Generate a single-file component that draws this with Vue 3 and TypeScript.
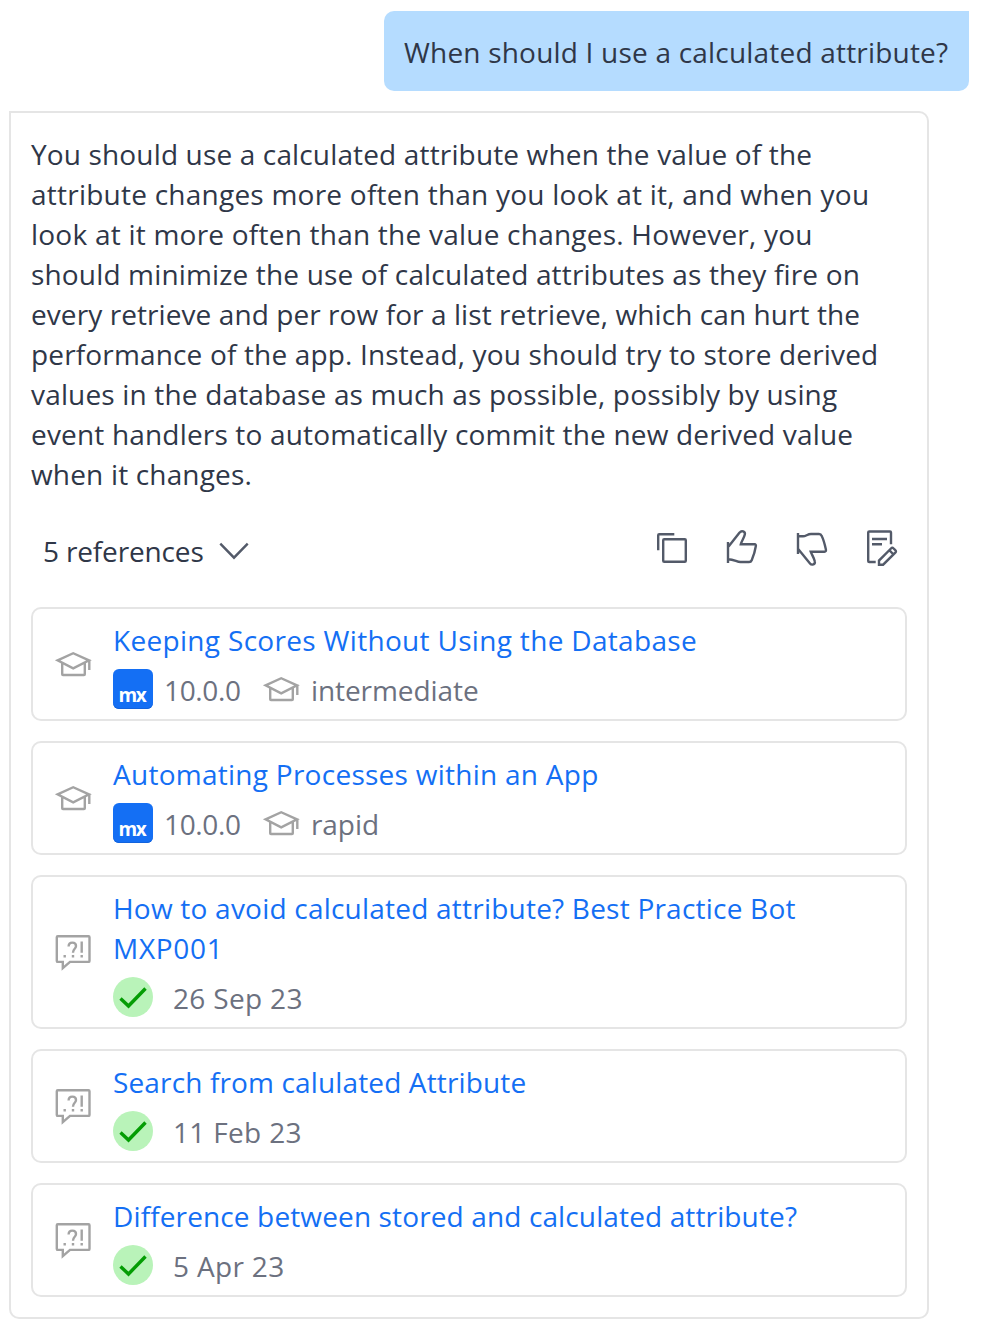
<script setup lang="ts">
interface Reference {
  kind: 'course' | 'forum'
  title: string[]
  detail: string
  level?: string
}

const question = 'When should I use a calculated attribute?'

const answer: string[] = [
  'You should use a calculated attribute when the value of the',
  'attribute changes more often than you look at it, and when you',
  'look at it more often than the value changes. However, you',
  'should minimize the use of calculated attributes as they fire on',
  'every retrieve and per row for a list retrieve, which can hurt the',
  'performance of the app. Instead, you should try to store derived',
  'values in the database as much as possible, possibly by using',
  'event handlers to automatically commit the new derived value',
  'when it changes.',
]

const references: Reference[] = [
  { kind: 'course', title: ['Keeping Scores Without Using the Database'], detail: '10.0.0', level: 'intermediate' },
  { kind: 'course', title: ['Automating Processes within an App'], detail: '10.0.0', level: 'rapid' },
  { kind: 'forum', title: ['How to avoid calculated attribute? Best Practice Bot', 'MXP001'], detail: '26 Sep 23' },
  { kind: 'forum', title: ['Search from calulated Attribute'], detail: '11 Feb 23' },
  { kind: 'forum', title: ['Difference between stored and calculated attribute?'], detail: '5 Apr 23' },
]
</script>

<template>
  <main class="chat">
    <div class="question"><span>{{ question }}</span></div>

    <section class="answer">
      <p class="body">
        <span v-for="(line, i) in answer" :key="i" class="line" :class="`l${i + 1}`">{{ line }}</span>
      </p>

      <div class="toolbar">
        <button class="toggle" type="button">
          <span>{{ references.length }} references</span>
          <svg class="chevron" viewBox="0 0 30 18"><path d="M1.3 1.7 15 15.7 28.7 1.7" /></svg>
        </button>
        <div class="actions">
          <svg viewBox="0 0 40 40"><path d="M6.2 22.3V7.2Q6.2 6.2 7.2 6.2H22.3" /><rect x="11.2" y="11.2" width="22.6" height="22.6" rx="1" /></svg>
          <svg viewBox="0 0 40 40">
            <path d="M6 14V35M6 19.3 17.6 4.6C19.5 2 23.6 3.4 22.8 6.6 22.2 9.6 19.4 13.6 18.8 16.3H32.5Q34.3 16.5 33.8 18.3 32.8 25 29.7 32.2 29 34 27 34H18.5C14.5 34 12.5 31.3 6 31.3" />
          </svg>
          <svg viewBox="0 0 40 40">
            <path d="M6 5V26M6 8.3H11C14 8.3 15.5 6 19 6H27Q29 6 29.6 7.8C31.8 12 32.8 16.5 33.9 21.6Q34.3 23.7 32.5 23.7H18.7C19.6 26.5 22.2 30 22.8 33.4 23.4 36.4 19.8 37.7 18 35.4L6 20.8" />
          </svg>
          <svg viewBox="0 0 40 40">
            <path d="M13.7 34H7.2Q6.2 34 6.2 33V4.5Q6.2 3.5 7.2 3.5H28Q29 3.5 29 4.5V16.3M10 11H25M10 16.3H20" />
            <path d="M17 36.7V32.6L29 20.5Q30.3 19.2 31.6 20.5L33.3 22.2Q34.6 23.4 33.3 24.7L21.1 36.7ZM27.3 22.2 31.5 26.5" />
          </svg>
        </div>
      </div>

      <ul class="references">
        <li v-for="(item, i) in references" :key="i" class="reference" :class="`r${i + 1}`">
          <svg v-if="item.kind === 'course'" class="icon" viewBox="0 0 40 40">
            <path d="M4.6 16.4 20.2 9.2 36 16.4 20.2 24.4ZM36.3 15.6V26M9.2 19V30.2Q9.2 31 10 31H31Q31.8 31 31.8 30.2V19" />
          </svg>
          <svg v-else class="icon" viewBox="0 0 40 40">
            <path d="M4.8 4.2H35.5Q36.5 4.2 36.5 5.2V28.9Q36.5 29.9 35.5 29.9H17L9.8 36.2V29.9H4.8Q3.8 29.9 3.8 28.9V5.2Q3.8 4.2 4.8 4.2ZM15.6 14.5Q15.7 10.6 19.3 10.6 23 10.6 23 14C23 17 20 16.7 20 20.8M28.7 9.6V20.8M10.5 24.3H12.9M18.8 24.3H21.2M27.5 24.3H29.9" />
          </svg>
          <div class="content">
            <a class="title"><span v-for="(line, n) in item.title" :key="n" class="line">{{ line }}</span></a>
            <div class="meta" :class="item.kind">
              <template v-if="item.kind === 'course'">
                <span class="mx">mx</span>
                <span class="detail">{{ item.detail }}</span>
                <svg class="icon" viewBox="0 0 40 40">
                  <path d="M4.6 16.4 20.2 9.2 36 16.4 20.2 24.4ZM36.3 15.6V26M9.2 19V30.2Q9.2 31 10 31H31Q31.8 31 31.8 30.2V19" />
                </svg>
                <span class="level">{{ item.level }}</span>
              </template>
              <template v-else>
                <svg class="check" viewBox="0 0 40 40"><circle cx="20" cy="20" r="20" /><path d="M7.5 21.5 15.5 29 32.5 11.5" /></svg>
                <span class="detail">{{ item.detail }}</span>
              </template>
            </div>
          </div>
        </li>
      </ul>
    </section>
  </main>
</template>

<style>
body {
  margin: 0;
  background: #fff;
}
</style>

<style scoped>
.chat {
  box-sizing: border-box;
  width: 983px;
  height: 1332px;
  padding: 11px 14px 13px 9px;
  display: flex;
  flex-direction: column;
  gap: 20px;
  font-family: 'Open Sans', 'Noto Sans', sans-serif;
  font-size: 28px;
  line-height: 40px;
  color: #2f3748;
  white-space: nowrap;
}
.question {
  box-sizing: border-box;
  align-self: flex-end;
  width: 585px;
  height: 80px;
  padding: 21px 20px 19px;
  border-radius: 10px 0 10px 10px;
  background: #b5dcff;
  letter-spacing: 0.2px;
}
.answer {
  box-sizing: border-box;
  width: 920px;
  height: 1208px;
  padding: 20px;
  border: 2px solid #e5e5e5;
  border-radius: 0 10px 10px 10px;
}
.body {
  margin: 0;
  padding-top: 1px;
}
.line {
  display: block;
  width: max-content;
}
.l1 { letter-spacing: 0.149px; }
.l2 { letter-spacing: 0.237px; }
.l3 { letter-spacing: 0.23px; }
.l4 { letter-spacing: 0.158px; }
.l5 { letter-spacing: 0.08px; }
.l6 { letter-spacing: 0.155px; }
.l7 { letter-spacing: 0.167px; }
.l8 { letter-spacing: 0.175px; }
.l9 { letter-spacing: 0.17px; }
.toolbar {
  box-sizing: border-box;
  display: flex;
  justify-content: space-between;
  align-items: flex-start;
  height: 113px;
  padding: 34px 5px 0 12px;
}
.toggle {
  display: flex;
  align-items: flex-start;
  justify-content: space-between;
  width: 206px;
  margin: 3px 0 0;
  padding: 0;
  border: 0;
  background: none;
  font: inherit;
  color: inherit;
  letter-spacing: -0.15px;
}
.chevron {
  width: 30px;
  height: 18px;
  margin-top: 11px;
}
.actions {
  display: flex;
  gap: 30px;
}
svg {
  display: block;
  flex: none;
  width: 40px;
  height: 40px;
  fill: none;
  stroke: #535a69;
  stroke-width: 2.4;
}
.references {
  display: grid;
  gap: 20px;
  margin: 0;
  padding: 0;
  list-style: none;
}
.reference {
  display: flex;
  align-items: center;
  gap: 20px;
  padding: 10px 20px;
  border: 2px solid #e5e5e5;
  border-radius: 10px;
}
.icon {
  stroke: #a3a3a3;
}
.content {
  display: grid;
  gap: 10px;
}
.title {
  color: #146ff4;
}
.title .line {
  margin: 1px 0 -1px;
}
.r1 .title { letter-spacing: 0.317px; }
.r2 .title { letter-spacing: 0.265px; }
.r3 .title { letter-spacing: 0.22px; }
.r3 .title .line + .line { letter-spacing: 0.7px; }
.r4 .title { letter-spacing: 0.14px; }
.r5 .title { letter-spacing: 0.13px; }
.meta {
  display: flex;
  height: 40px;
  color: #6c717f;
}
.meta span {
  padding-top: 1px;
}
.meta .mx {
  box-sizing: border-box;
  width: 40px;
  height: 40px;
  margin-right: 11px;
  padding: 6px 2px 0 0;
  border-radius: 6px;
  background: #146ff4;
  box-shadow: inset 0 -1px #1263dd;
  color: #fff;
  font-size: 19px;
  font-weight: 700;
  letter-spacing: -1.2px;
  text-align: center;
}
.course .detail {
  width: 97px;
  letter-spacing: -0.35px;
}
.course .level {
  margin-left: 10px;
  letter-spacing: -0.08px;
}
.forum .detail {
  margin-left: 20px;
  letter-spacing: 0.33px;
}
.check circle {
  fill: #b9f3b9;
  stroke: none;
}
.check path {
  stroke: #049d04;
  stroke-width: 3.4;
}
</style>
